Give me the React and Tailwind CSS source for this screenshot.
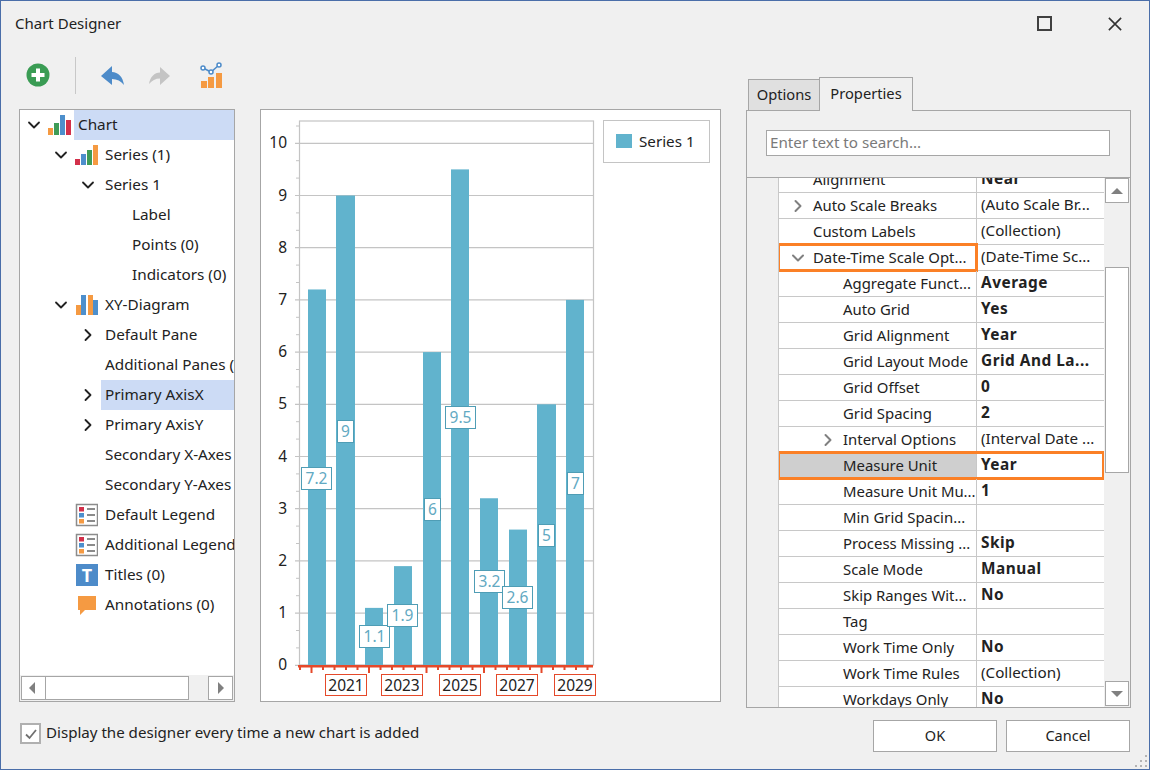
import { ChevronDown, ChevronRight } from "lucide-react"

const font = "font-['Noto_Sans','Open_Sans',sans-serif]"

function BarsIcon({ bars }) {
  return (
    <svg width="24" height="24" viewBox="0 0 24 24" className="shrink-0">
      {bars.map(([x, w, h, c]) => (
        <rect key={x} x={x} y={22 - h} width={w} height={h} fill={c} />
      ))}
    </svg>
  )
}

const chartBars = [[1, 5, 7, "#f59a42"], [7, 5, 12, "#3f9c57"], [13, 5, 20, "#4d8fcc"], [19, 5, 15, "#d3304a"]]
const seriesBars = [[1, 5, 6, "#d3304a"], [7, 5, 11, "#4d8fcc"], [13, 5, 15, "#3f9c57"], [19, 5, 20, "#f59a42"]]
const xyBars = [[2, 5, 10, "#f59a42"], [7, 5, 20, "#4d8fcc"], [14, 5, 20, "#f59a42"], [19, 5, 15, "#4d8fcc"]]

function LegendIcon() {
  return (
    <svg width="24" height="24" viewBox="0 0 24 24" className="shrink-0">
      <rect x="2.5" y="1.5" width="21" height="21" fill="#fff" stroke="#8c8c8c" strokeWidth="1.5" />
      <rect x="5" y="4" width="5" height="4.5" fill="#d3304a" />
      <rect x="5" y="10" width="5" height="4.5" fill="#4d8fcc" />
      <rect x="5" y="16" width="5" height="4.5" fill="#f59a42" />
      <path d="M13 6h8M13 12h8M13 18h8" stroke="#666" strokeWidth="1.5" />
    </svg>
  )
}

function TitlesIcon() {
  return (
    <span className="ml-[2px] flex h-[22px] w-[22px] shrink-0 items-center justify-center bg-[#4d8bc9] font-['Liberation_Serif',serif] text-[18px] font-bold text-white">
      T
    </span>
  )
}

function NoteIcon() {
  return (
    <svg width="24" height="24" viewBox="0 0 24 24" className="shrink-0">
      <path d="M4 3h18v14H11l-5 5v-5H4z" fill="#f59a42" />
    </svg>
  )
}

const treeRows = [
  { text: "Chart", level: 0, open: true, icon: <BarsIcon bars={chartBars} />, selected: true },
  { text: "Series (1)", level: 1, open: true, icon: <BarsIcon bars={seriesBars} /> },
  { text: "Series 1", level: 2, open: true },
  { text: "Label", level: 3 },
  { text: "Points (0)", level: 3 },
  { text: "Indicators (0)", level: 3 },
  { text: "XY-Diagram", level: 1, open: true, icon: <BarsIcon bars={xyBars} /> },
  { text: "Default Pane", level: 2, closed: true },
  { text: "Additional Panes (0)", level: 2 },
  { text: "Primary AxisX", level: 2, closed: true, selected: true },
  { text: "Primary AxisY", level: 2, closed: true },
  { text: "Secondary X-Axes (0)", level: 2 },
  { text: "Secondary Y-Axes (0)", level: 2 },
  { text: "Default Legend", level: 1, icon: <LegendIcon /> },
  { text: "Additional Legends (0)", level: 1, icon: <LegendIcon /> },
  { text: "Titles (0)", level: 1, icon: <TitlesIcon /> },
  { text: "Annotations (0)", level: 1, icon: <NoteIcon /> },
]

const treeIndent = ["pl-0", "pl-[27px]", "pl-[54px]", "pl-[81px]"]

function TreeRow({ row }) {
  return (
    <div className={`flex h-[30px] items-center ${treeIndent[row.level]}`}>
      <span className="flex w-[27px] shrink-0 justify-center text-[#222]">
        {row.open && <ChevronDown size={20} strokeWidth={2.2} />}
        {row.closed && <ChevronRight size={20} strokeWidth={2.2} />}
      </span>
      {row.icon}
      <span className={`flex h-full flex-1 items-center whitespace-nowrap pb-[2px] pl-[4px] ${row.icon ? "ml-[3px]" : ""} ${row.selected ? "bg-[#ccdbf5]" : ""}`}>
        {row.text}
      </span>
    </div>
  )
}

function Triangle({ dir }) {
  const paths = {
    left: "M9 2v12L3 8z",
    right: "M5 2v12l6-6z",
    up: "M8 5l6 6H2z",
    down: "M2 5h12l-6 6z",
  }
  return (
    <svg width="16" height="16" viewBox="0 0 16 16">
      <path d={paths[dir]} fill="#808080" />
    </svg>
  )
}

function Tree() {
  return (
    <div className="flex h-[593px] w-[216px] flex-col border border-[#a6a6a6] bg-white text-[15.3px]">
      <div className="flex-1 overflow-hidden">
        {treeRows.map((r) => (
          <TreeRow key={r.text} row={r} />
        ))}
      </div>
      <div className="flex h-[26px] items-start bg-[#f0f0f0] pl-[1px] pt-[1px]">
        <div className="flex h-[24px] w-[25px] items-center justify-center border border-[#a6a6a6] bg-white">
          <Triangle dir="left" />
        </div>
        <div className="h-[24px] w-[143px] border border-l-0 border-[#a6a6a6] bg-white" />
        <div className="ml-[19px] flex h-[24px] w-[25px] items-center justify-center border border-[#a6a6a6] bg-white">
          <Triangle dir="right" />
        </div>
      </div>
    </div>
  )
}

const bars = [
  [308, 18, 7.2], [336, 19, 9], [365, 18, 1.1], [394, 18, 1.9], [423, 18, 6],
  [451, 18, 9.5], [480, 18, 3.2], [509, 18, 2.6], [537, 19, 5], [566, 18, 7],
]
const labels = [
  [301, 467, 31, "7.2"], [337, 420, 17, "9"], [359, 625, 31, "1.1"], [387, 604, 31, "1.9"],
  [424, 498, 17, "6"], [445, 406, 31, "9.5"], [474, 570, 31, "3.2"], [502, 586, 31, "2.6"],
  [538, 524, 17, "5"], [567, 472, 17, "7"],
]
const years = [[325, "2021"], [381, "2023"], [439, "2025"], [496, "2027"], [554, "2029"]]
const yTicks = [0, 1, 2, 3, 4, 5, 6, 7, 8, 9, 10]
const yOf = (v) => 665.3 - v * 52.2

function Chart() {
  return (
    <div className="h-[593px] w-[461px] border border-[#a6a6a6] bg-white">
      <svg width="459" height="591" viewBox="261 110 459 591" className="block">
        <rect x="299.5" y="121" width="294" height="544" fill="none" stroke="#c4c4c4" strokeWidth="1.2" />
        {yTicks.map((v) => (
          <g key={v}>
            <line x1="295" x2="593" y1={yOf(v)} y2={yOf(v)} stroke="#c4c4c4" strokeWidth="1.2" />
            <text x="287" y={yOf(v) + 5} textAnchor="end" fontSize="15.5" fill="#222">{v}</text>
            {v < 10 && (
              <>
                <line x1="296" x2="299" y1={yOf(v + 1 / 3)} y2={yOf(v + 1 / 3)} stroke="#c4c4c4" />
                <line x1="296" x2="299" y1={yOf(v + 2 / 3)} y2={yOf(v + 2 / 3)} stroke="#c4c4c4" />
              </>
            )}
          </g>
        ))}
        <line x1="296" x2="299" y1="126" y2="126" stroke="#c4c4c4" />
        {bars.map(([x, w, v]) => (
          <rect key={x} x={x} y={yOf(v)} width={w} height={665.3 - yOf(v)} fill="#61b3cd" />
        ))}
        <rect x="298" y="665" width="295" height="2.5" fill="#e5492a" />
        {Array.from({ length: 26 }, (_, i) => 299 + i * 11.5).map((x, i) => (
          <rect key={i} x={x} y="666" width="2" height={(i + 4) % 5 === 0 ? 7 : 4} fill="#e5492a" />
        ))}
        {labels.map(([x, y, w, t]) => (
          <g key={t}>
            <rect x={x + 0.5} y={y + 0.5} width={w - 1} height="22" fill="#fff" stroke="#4f9db5" />
            <text x={x + w / 2} y={y + 17} textAnchor="middle" fontSize="15.5" fill="#62a9c2">{t}</text>
          </g>
        ))}
        {years.map(([x, t]) => (
          <g key={t}>
            <rect x={x + 0.5} y="674.5" width="41" height="21" fill="#fff" stroke="#e5492a" />
            <text x={x + 21} y="690.5" textAnchor="middle" fontSize="15.5" fill="#222">{t}</text>
          </g>
        ))}
        <rect x="603.5" y="120.5" width="106" height="42" fill="#fff" stroke="#c4c4c4" />
        <rect x="616" y="134" width="16" height="14" fill="#61b3cd" />
        <text x="639" y="146.5" fontSize="15.2" fill="#222">Series 1</text>
      </svg>
    </div>
  )
}

const props = [
  { name: "Alignment", value: "Near", bold: true, level: 1 },
  { name: "Auto Scale Breaks", value: "(Auto Scale Br...", level: 1, closed: true },
  { name: "Custom Labels", value: "(Collection)", level: 1 },
  { name: "Date-Time Scale Opt...", value: "(Date-Time Sc...", level: 1, open: true, mark: "name" },
  { name: "Aggregate Funct...", value: "Average", bold: true, level: 2 },
  { name: "Auto Grid", value: "Yes", bold: true, level: 2 },
  { name: "Grid Alignment", value: "Year", bold: true, level: 2 },
  { name: "Grid Layout Mode", value: "Grid And La...", bold: true, level: 2 },
  { name: "Grid Offset", value: "0", bold: true, level: 2 },
  { name: "Grid Spacing", value: "2", bold: true, level: 2 },
  { name: "Interval Options", value: "(Interval Date ...", level: 2, closed: true },
  { name: "Measure Unit", value: "Year", bold: true, level: 2, mark: "row" },
  { name: "Measure Unit Mu...", value: "1", bold: true, level: 2 },
  { name: "Min Grid Spacin...", value: "", level: 2 },
  { name: "Process Missing ...", value: "Skip", bold: true, level: 2 },
  { name: "Scale Mode", value: "Manual", bold: true, level: 2 },
  { name: "Skip Ranges Wit...", value: "No", bold: true, level: 2 },
  { name: "Tag", value: "", level: 2 },
  { name: "Work Time Only", value: "No", bold: true, level: 2 },
  { name: "Work Time Rules", value: "(Collection)", level: 2 },
  { name: "Workdays Only", value: "No", bold: true, level: 2 },
]

function PropRow({ p }) {
  return (
    <div className="relative flex h-[26px] border-b border-[#c8c8c8]">
      <div className={`flex w-[198px] shrink-0 items-center whitespace-nowrap border-r border-[#c8c8c8] text-[14.9px] ${p.level === 1 ? "pl-[7px]" : "pl-[37px]"} ${p.mark === "row" ? "bg-[#cfcfcf]" : ""}`}>
        <span className="flex w-[27px] shrink-0 pl-[2px] text-[#808080]">
          {p.open && <ChevronDown size={20} strokeWidth={2.4} />}
          {p.closed && <ChevronRight size={20} strokeWidth={2.4} />}
        </span>
        {p.name}
      </div>
      <div className={`flex-1 whitespace-nowrap pl-[4px] leading-[23px] ${p.bold ? "text-[15.4px] font-bold tracking-[0.5px]" : "text-[15.2px]"}`}>{p.value}</div>
      {p.mark === "name" && <div className="absolute left-[-2px] top-[-2px] h-[29px] w-[201px] border-[3px] border-[#fb8026]" />}
      {p.mark === "row" && <div className="absolute left-[-2px] top-[-2px] h-[29px] w-[328px] border-[3px] border-[#fb8026]" />}
    </div>
  )
}

function PropertyPanel() {
  return (
    <div className="w-[385px] pt-[30px]">
      <div className="relative z-10 -mb-px flex h-[34px] items-end pl-[2px] text-[14.7px]">
        <div className="flex h-[32px] w-[72px] items-center justify-center border border-[#a6a6a6] bg-[#e0e0e0] pb-[2px]">Options</div>
        <div className="-ml-px flex h-[34px] w-[94px] items-center justify-center border border-b-0 border-[#a6a6a6] bg-[#f0f0f0] pb-[2px]">Properties</div>
      </div>
      <div className="flex h-[598px] flex-col border border-[#a6a6a6]">
        <div className="h-[66px] shrink-0 pl-[19px] pt-[19px]">
          <div className="flex h-[26px] w-[344px] items-center border border-[#a6a6a6] bg-white pb-[1px] pl-[3px] text-[15.2px] text-[#7a7a7a]">Enter text to search...</div>
        </div>
        <div className="flex min-h-0 flex-1 border-t border-[#a6a6a6]">
          <div className="w-[31px] shrink-0" />
          <div className="w-[326px] shrink-0 overflow-hidden border-l border-[#c8c8c8] bg-white">
            <div className="-mt-[11px]">
              {props.map((p) => (
                <PropRow key={p.name} p={p} />
              ))}
            </div>
          </div>
          <div className="flex flex-1 flex-col pl-[1px]">
            <div className="flex h-[25px] w-[24px] items-center justify-center border border-[#a6a6a6] bg-white">
              <Triangle dir="up" />
            </div>
            <div className="mt-[64px] h-[206px] w-[24px] border border-[#a6a6a6] bg-white" />
            <div className="mt-[208px] flex h-[25px] w-[24px] items-center justify-center border border-[#a6a6a6] bg-white">
              <Triangle dir="down" />
            </div>
          </div>
        </div>
      </div>
    </div>
  )
}

function Toolbar() {
  return (
    <div className="flex h-[62px] items-start pl-[25px] pt-[10px]">
      <svg width="24" height="24" viewBox="0 0 24 24" className="mt-[6px]">
        <circle cx="12" cy="12" r="11.5" fill="#3a9c54" />
        <path d="M12 5.5v13M5.5 12h13" stroke="#fff" strokeWidth="4" />
      </svg>
      <div className="ml-[25px] h-[37px] w-px bg-[#c8c8c8]" />
      <svg width="24" height="24" viewBox="0 0 24 24" className="ml-[24px] mt-[7px]">
        <path d="M1 12 12 2v6c6 0 11 5 12 13-3-4-7-6-12-6v6z" fill="#4d8bc9" />
      </svg>
      <svg width="24" height="24" viewBox="0 0 24 24" className="ml-[24px] mt-[7px]">
        <path d="M22 12 12 3v5.5C6.500 8.500 2 13 1 20c3-3.500 6.500-5.500 11-5.500V21z" fill="#c4c4c4" />
      </svg>
      <svg width="24" height="28" viewBox="0 0 24 28" className="ml-[27px] mt-[5px]">
        <rect x="2" y="19" width="6" height="7" fill="#f59a42" />
        <rect x="9" y="15" width="6" height="11" fill="#f59a42" />
        <rect x="17" y="11" width="6" height="15" fill="#f59a42" />
        <path d="M4 6l8 4 8-7" fill="none" stroke="#4d8bc9" strokeWidth="1.5" />
        <circle cx="4" cy="6" r="2" fill="#fff" stroke="#4d8bc9" strokeWidth="1.5" />
        <circle cx="12" cy="10" r="2" fill="#fff" stroke="#4d8bc9" strokeWidth="1.5" />
        <circle cx="20" cy="3" r="2" fill="#fff" stroke="#4d8bc9" strokeWidth="1.5" />
      </svg>
    </div>
  )
}

export default function App() {
  return (
    <div className={`relative flex h-[770px] w-[1150px] flex-col overflow-hidden border border-[#4a6ea9] bg-[#f0f0f0] text-[14.5px] text-[#222] ${font}`}>
      <div className="flex h-[46px] shrink-0 items-center justify-between pl-[14px] pr-[27px] text-[15px]">
        <span className="-mt-[1px]">Chart Designer</span>
        <div className="flex items-center gap-[56px]">
          <div className="mb-[1px] h-[15px] w-[15px] border-2 border-[#404040]" />
          <svg width="14" height="14" viewBox="0 0 16 16">
            <path d="M1 1l14 14M15 1 1 15" stroke="#333" strokeWidth="1.8" />
          </svg>
        </div>
      </div>

      <div className="flex h-[661px] shrink-0">
        <div className="w-[745px] shrink-0">
          <Toolbar />
          <div className="flex gap-[25px] pl-[18px]">
            <Tree />
            <Chart />
          </div>
        </div>
        <PropertyPanel />
      </div>

      <div className="flex flex-1 items-start justify-between pl-[19px] pr-[19px] pt-[12px]">
        <div className="mt-[3px] flex items-center gap-[5px]">
          <div className="flex h-[21px] w-[21px] items-center justify-center border-2 border-[#b0b0b0] bg-white">
            <svg width="14" height="14" viewBox="0 0 14 14">
              <path d="M2 7.500 5.500 11 12 3" fill="none" stroke="#707070" strokeWidth="1.8" />
            </svg>
          </div>
          <span className="-mt-[2px] text-[15.1px]">Display the designer every time a new chart is added</span>
        </div>
        <div className="flex gap-[9px]">
          <button className="h-[32px] w-[124px] border border-[#a6a6a6] bg-white">OK</button>
          <button className="h-[32px] w-[124px] border border-[#a6a6a6] bg-white">Cancel</button>
        </div>
      </div>

      <svg width="14" height="14" viewBox="0 0 14 14" className="absolute bottom-[1px] right-[1px]">
        <g fill="#b4b4b4">
          <rect x="11" y="1" width="2" height="2" />
          <rect x="6" y="6" width="2" height="2" />
          <rect x="11" y="6" width="2" height="2" />
          <rect x="1" y="11" width="2" height="2" />
          <rect x="6" y="11" width="2" height="2" />
          <rect x="11" y="11" width="2" height="2" />
        </g>
      </svg>
    </div>
  )
}
